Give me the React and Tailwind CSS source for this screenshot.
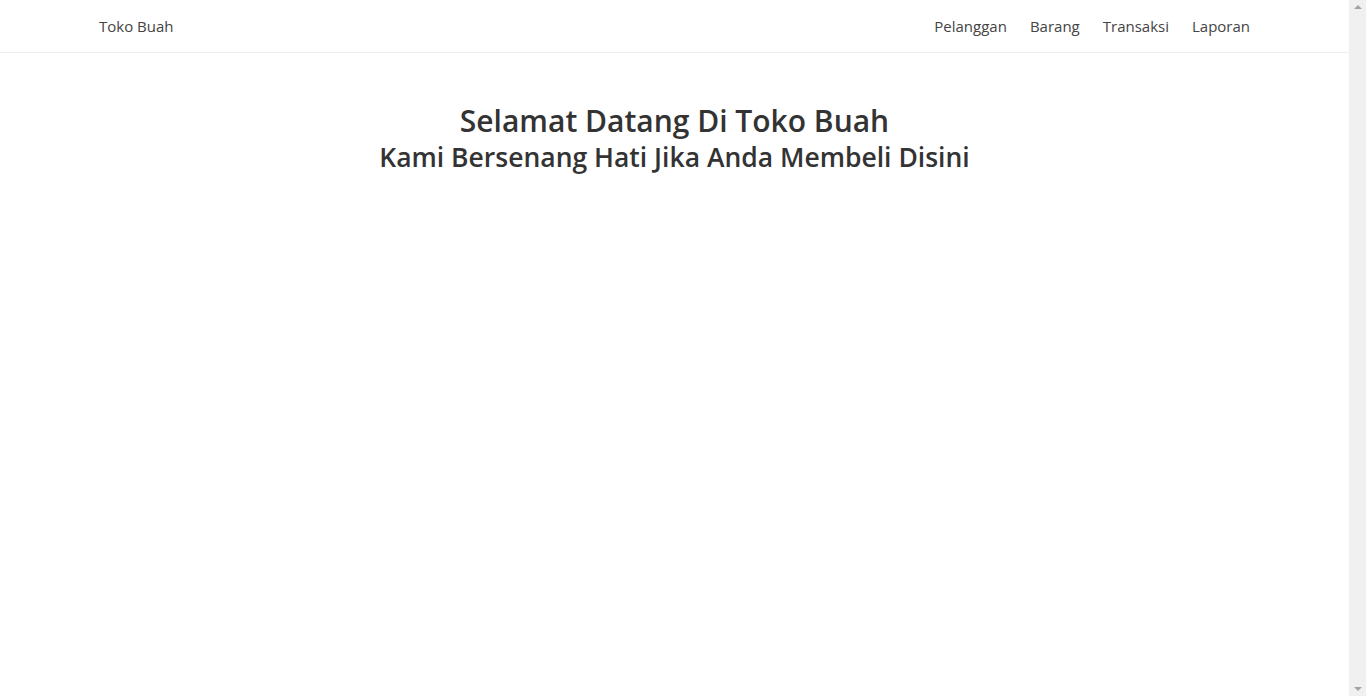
export default function App() {
  const links = ['Pelanggan', 'Barang', 'Transaksi', 'Laporan']

  return (
    <div className="flex h-[696px] w-full overflow-hidden bg-white font-['Open_Sans',sans-serif] text-[#333]">
      <div className="flex-1">
        <nav className="flex h-[53px] items-center justify-between border-b border-[#eeeeee] px-[99px]">
          <a className="text-[15px] text-[#444]">Toko Buah</a>
          <ul className="flex gap-[23px]">
            {links.map(l => (
              <li key={l}>
                <a className="text-[15px] text-[#444]">{l}</a>
              </li>
            ))}
          </ul>
        </nav>

        <div className="mt-[49px] text-center">
          <h1 className="text-[30px] font-semibold leading-[37px]">Selamat Datang Di Toko Buah</h1>
          <h2 className="text-[26.5px] font-semibold leading-[36px]">Kami Bersenang Hati Jika Anda Membeli Disini</h2>
        </div>
      </div>

      {/* fake scrollbar */}
      <div className="flex w-[17px] flex-col items-center justify-between bg-[#f0f0f0] py-[5px]">
        <div className="h-0 w-0 border-x-[4px] border-b-[4px] border-x-transparent border-b-[#a3a3a3]" />
        <div className="h-0 w-0 border-x-[4px] border-t-[4px] border-x-transparent border-t-[#a3a3a3]" />
      </div>
    </div>
  )
}
